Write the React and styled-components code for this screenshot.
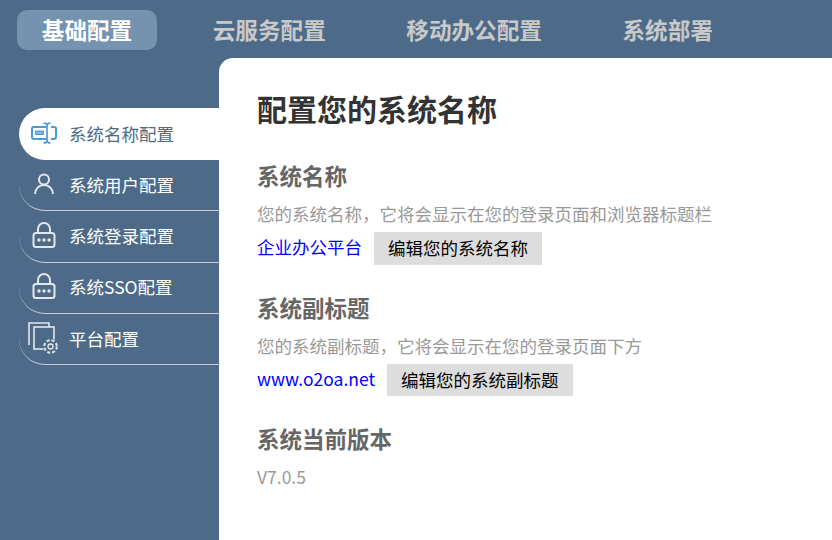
import styled, { createGlobalStyle } from "styled-components";

const GlobalStyle = createGlobalStyle`
  html, body {
    margin: 0;
    padding: 0;
    height: 100%;
    overflow: hidden;
  }
  body {
    font-family: "Noto Sans CJK SC", "Noto Sans", sans-serif;
  }
`;

function NameIcon() {
  return (
    <svg width="26" height="22" viewBox="0 0 26 22" fill="none" stroke="#4a9bd1" strokeWidth="2">
      <path d="M15 5H3a2 2 0 0 0-2 2v8a2 2 0 0 0 2 2h12" />
      <path d="M20 5h3a2 2 0 0 1 2 2v8a2 2 0 0 1-2 2h-3" />
      <path d="M12.5 1c2.5 0 3.5 1 3.5 2.5v15c0 1.500-1 2.500-3.500 2.500M19.500 1C17 1 16 2 16 3.500v15c0 1.500 1 2.500 3.500 2.500" strokeWidth="1.700" />
      <rect x="4.500" y="9" width="8" height="3.500" fill="#7db8df" stroke="#4a9bd1" strokeWidth="1" />
    </svg>
  );
}

function UserIcon() {
  return (
    <svg width="22" height="22" viewBox="0 0 22 22" fill="none" stroke="#e4e8ec" strokeWidth="2">
      <circle cx="11" cy="6.500" r="5" />
      <path d="M2 21c0-5 4-9 9-9s9 4 9 9" />
    </svg>
  );
}

function LockIcon() {
  return (
    <svg width="24" height="26" viewBox="0 0 24 26" fill="none" stroke="#e4e8ec" strokeWidth="2">
      <path d="M6 11V7a6 6 0 0 1 12 0v4" />
      <rect x="1.500" y="11" width="21" height="14" rx="2.500" />
      <circle cx="7" cy="18" r="1.700" fill="#e4e8ec" stroke="none" />
      <circle cx="12" cy="18" r="1.700" fill="#e4e8ec" stroke="none" />
      <circle cx="17" cy="18" r="1.700" fill="#e4e8ec" stroke="none" />
    </svg>
  );
}

function PlatformIcon() {
  return (
    <svg width="32" height="32" viewBox="0 0 32 32" fill="none" stroke="#e4e8ec" strokeWidth="1.600">
      <path d="M1 23V1h20v4" />
      <rect x="6" y="5" width="20" height="22" />
      <circle cx="22.500" cy="24.500" r="8" fill="#4d6b88" stroke="none" />
      <circle cx="22.500" cy="24.500" r="6.300" strokeWidth="2" strokeDasharray="3 2" />
      <circle cx="22.500" cy="24.500" r="2.500" strokeWidth="1.300" />
    </svg>
  );
}

const tabs = ["基础配置", "云服务配置", "移动办公配置", "系统部署"];

const menu = [
  { label: "系统名称配置", icon: <NameIcon />, active: true },
  { label: "系统用户配置", icon: <UserIcon /> },
  { label: "系统登录配置", icon: <LockIcon /> },
  { label: "系统SSO配置", icon: <LockIcon /> },
  { label: "平台配置", icon: <PlatformIcon /> },
];

function App() {
  return (
    <Page>
      <GlobalStyle />
      <TopBar>
        {tabs.map((tab, i) => (
          <Tab key={tab} $active={i === 0}>
            {tab}
          </Tab>
        ))}
      </TopBar>
      <Body>
        <Sidebar>
          {menu.map((item) => (
            <MenuItem key={item.label} $active={item.active}>
              <MenuIcon>{item.icon}</MenuIcon>
              <MenuLabel>{item.label}</MenuLabel>
            </MenuItem>
          ))}
        </Sidebar>
        <Content>
          <Title>配置您的系统名称</Title>
          <Section>
            <Heading>系统名称</Heading>
            <Description>您的系统名称，它将会显示在您的登录页面和浏览器标题栏</Description>
            <ValueRow>
              <Value>企业办公平台</Value>
              <EditButton>编辑您的系统名称</EditButton>
            </ValueRow>
          </Section>
          <Section>
            <Heading>系统副标题</Heading>
            <Description>您的系统副标题，它将会显示在您的登录页面下方</Description>
            <ValueRow>
              <Value>www.o2oa.net</Value>
              <EditButton>编辑您的系统副标题</EditButton>
            </ValueRow>
          </Section>
          <Section>
            <Heading>系统当前版本</Heading>
            <Version>V7.0.5</Version>
          </Section>
        </Content>
      </Body>
    </Page>
  );
}

export default App;

const Page = styled.div`
  width: 832px;
  height: 540px;
  background: #4d6b88;
  display: flex;
  flex-direction: column;
  overflow: hidden;
`;

const TopBar = styled.div`
  height: 58px;
  flex: none;
  display: flex;
  align-items: flex-start;
  gap: 31px;
  padding: 10px 0 0 17px;
  box-sizing: border-box;
`;

const Tab = styled.div`
  height: 40px;
  line-height: 39px;
  padding: 0 24.8px;
  border-radius: 10px;
  font-size: 22.6px;
  font-weight: 700;
  color: ${(p) => (p.$active ? "#ffffff" : "#c9c9c9")};
  background: ${(p) => (p.$active ? "#7592af" : "transparent")};
`;

const Body = styled.div`
  flex: 1;
  display: flex;
  min-height: 0;
`;

const Sidebar = styled.div`
  width: 219px;
  flex: none;
  box-sizing: border-box;
  padding: 50px 0 0 19px;
`;

const MenuItem = styled.div`
  height: ${(p) => (p.$active ? "52px" : "51.3px")};
  box-sizing: border-box;
  display: flex;
  align-items: center;
  font-size: 17.5px;
  color: ${(p) => (p.$active ? "#4d6b88" : "#ffffff")};
  background: ${(p) => (p.$active ? "#ffffff" : "transparent")};
  border-radius: ${(p) => (p.$active ? "26px 0 0 26px" : "0 0 0 26px")};
  border-bottom: ${(p) => (p.$active ? "none" : "1px solid #c8ced6")};
`;

const MenuIcon = styled.span`
  width: 50px;
  flex: none;
  display: flex;
  justify-content: center;
  align-items: center;
  padding-bottom: 3px;
`;

const MenuLabel = styled.span`
  margin-bottom: 2px;
`;

const Content = styled.div`
  flex: 1;
  background: #ffffff;
  border-top-left-radius: 14px;
  padding: 28px 0 0 38px;
  box-sizing: border-box;
`;

const Title = styled.div`
  font-size: 30px;
  font-weight: 700;
  line-height: 44px;
  color: #333333;
  margin-bottom: 30px;
`;

const Section = styled.div`
  margin-bottom: 27px;
`;

const Heading = styled.div`
  font-size: 22.5px;
  font-weight: 700;
  line-height: 30px;
  color: #666666;
`;

const Description = styled.div`
  font-size: 17.5px;
  line-height: 26px;
  margin-top: 11px;
  color: #999999;
`;

const ValueRow = styled.div`
  display: flex;
  align-items: center;
  margin-top: 5px;
`;

const Value = styled.div`
  font-size: 17.5px;
  color: #0000ff;
  margin-bottom: 3px;
`;

const EditButton = styled.div`
  margin-left: 12px;
  height: 32.5px;
  line-height: 32px;
  padding: 0 14px;
  background: #dddddd;
  color: #000000;
  font-size: 17.5px;
`;

const Version = styled.div`
  font-size: 17.5px;
  line-height: 26px;
  margin-top: 11px;
  color: #999999;
`;
